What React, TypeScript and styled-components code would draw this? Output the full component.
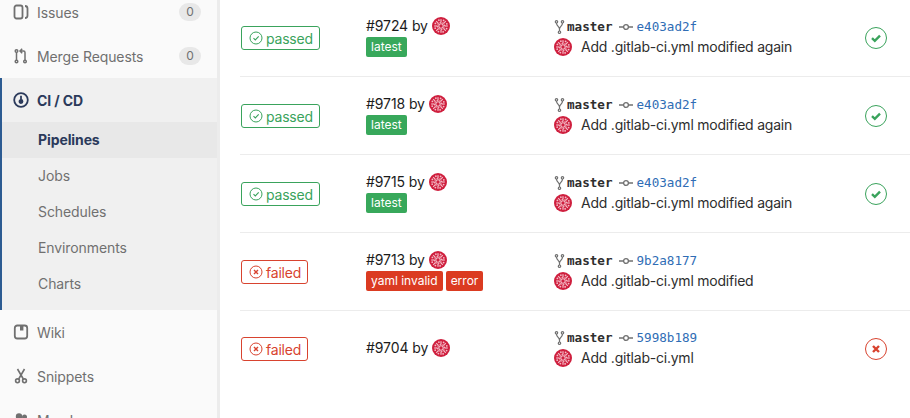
import React from "react"
import styled, { createGlobalStyle } from "styled-components"

const GlobalStyle = createGlobalStyle`
  html, body {
    margin: 0;
    padding: 0;
    background: #fff;
  }
  body {
    font-family: Inter, "Liberation Sans", sans-serif;
    font-size: 14px;
    color: #2e2e2e;
    overflow: hidden;
  }
`

const Page = styled.div`
  display: flex;
  width: 910px;
  height: 418px;
  overflow: hidden;
`

const Sidebar = styled.aside`
  flex: 0 0 217px;
  height: 418px;
  background: #fafafa;
  border-right: 3px solid #ececec;
  overflow: hidden;
`

const SideList = styled.nav`
  margin-top: -10px;
`

const SideItem = styled.div`
  display: flex;
  align-items: center;
  height: 44px;
  padding: 0 16px 0 13px;
  color: #707070;
  font-size: 14px;
  letter-spacing: -0.1px;
`

const SideIcon = styled.svg`
  flex: 0 0 16px;
  width: 16px;
  height: 16px;
  margin-right: 8px;
  fill: none;
  stroke: currentColor;
  stroke-width: 1.6;
`

const Count = styled.span`
  margin-left: auto;
  width: 22px;
  height: 18px;
  border-radius: 9px;
  background: #e8e8e8;
  color: #707070;
  font-size: 12px;
  line-height: 18px;
  text-align: center;
`

const ActiveGroup = styled.div`
  background: #f0f0f0;
  border-left: 2px solid #2c5b92;
  padding-bottom: 8px;
`

const ActiveHead = styled(SideItem)`
  padding-left: 11px;
  color: #2b3a5b;
  font-weight: 700;
`

const SubItem = styled.div<{ $active?: boolean }>`
  height: 36px;
  padding-left: 36px;
  line-height: 36px;
  font-size: 14px;
  letter-spacing: -0.1px;
  color: ${p => (p.$active ? "#2b3a5b" : "#707070")};
  font-weight: ${p => (p.$active ? 700 : 400)};
  background: ${p => (p.$active ? "#e8e8e8" : "transparent")};
`

const Main = styled.main`
  flex: 1;
  margin-top: -1px;
  padding-left: 20px;
`

const Row = styled.div`
  display: grid;
  grid-template-columns: 126px 188px 311px 1fr;
  align-items: center;
  height: 77px;
  border-bottom: 1px solid #ececec;
  &:last-child {
    height: 75px;
    border-bottom: none;
  }
`

const Status = styled.div<{ $color: string }>`
  display: inline-flex;
  justify-self: start;
  align-items: center;
  gap: 3px;
  height: 24px;
  margin: 1px 0 0 1px;
  padding: 0 6px 0 7px;
  box-sizing: border-box;
  border: 1px solid ${p => p.$color};
  border-radius: 3px;
  color: ${p => p.$color};
  font-size: 14px;
  letter-spacing: -0.2px;
`

const PipelineCell = styled.div`
  display: flex;
  flex-direction: column;
  gap: 2px;
  padding-bottom: 2px;
`

const IdLine = styled.div`
  display: flex;
  align-items: center;
  gap: 4px;
  height: 18px;
  color: #1c1c1c;
  letter-spacing: -0.1px;
`

const Tags = styled.div`
  display: flex;
  gap: 3px;
`

const Tag = styled.span<{ $color: string }>`
  height: 20px;
  padding: 0 5px;
  border-radius: 2px;
  background: ${p => p.$color};
  color: #fff;
  font-size: 12px;
  line-height: 20px;
`

const CommitCell = styled.div`
  display: flex;
  flex-direction: column;
  padding-bottom: 2px;
`

const RefLine = styled.div`
  display: flex;
  align-items: center;
  height: 20px;
  font-family: "DejaVu Sans Mono", "Liberation Mono", monospace;
  font-size: 12.6px;
`

const BranchName = styled.span`
  margin-left: 2px;
  font-weight: 700;
  color: #2e2e2e;
`

const Sha = styled.span`
  margin-left: 4px;
  color: #2f6db5;
`

const MessageLine = styled.div`
  display: flex;
  align-items: center;
  gap: 9px;
  height: 20px;
  color: #2e2e2e;
  letter-spacing: -0.22px;
`

const StageCell = styled.div`
  display: flex;
`

const StageRing = styled.span<{ $color: string }>`
  display: flex;
  align-items: center;
  justify-content: center;
  width: 22px;
  height: 22px;
  box-sizing: border-box;
  border: 1px solid ${p => p.$color};
  border-radius: 50%;
  color: ${p => p.$color};
`

const GREEN = "#3aa35c"
const RED = "#d8432f"

const Avatar = () => {
  const spokes = [0, 45, 90, 135, 180, 225, 270, 315]
  return (
    <svg width="18" height="18" viewBox="0 0 18 18" style={{ flex: "0 0 18px" }}>
      <circle cx="9" cy="9" r="9" fill="#cf1f3e" />
      {spokes.map(a => (
        <g key={a} transform={`rotate(${a} 9 9)`} fill="#f4bcc7">
          <rect x="8.4" y="2.2" width="1.2" height="3.4" />
          <circle cx="11.6" cy="3.4" r="0.9" />
          <circle cx="10.9" cy="6" r="0.7" />
        </g>
      ))}
      <circle cx="9" cy="9" r="2.2" fill="none" stroke="#f4bcc7" strokeWidth="1.1" />
    </svg>
  )
}

const StatusGlyph = ({ failed }: { failed: boolean }) => (
  <svg width="14" height="14" viewBox="0 0 14 14" fill="none" stroke="currentColor">
    <circle cx="7" cy="7" r="6" strokeWidth="1" />
    {failed ? (
      <path d="M5 5l4 4M9 5l-4 4" strokeWidth="1.4" />
    ) : (
      <path d="M4.5 7.2l1.8 1.800 3.400-3.600" strokeWidth="1.1" />
    )}
  </svg>
)

const StageGlyph = ({ failed }: { failed: boolean }) => (
  <svg width="12" height="12" viewBox="0 0 12 12" fill="none" stroke="currentColor" strokeWidth="2.4">
    {failed ? <path d="M3 3l6 6M9 3l-6 6" /> : <path d="M2 6.200l2.800 2.600 5.200-5.200" />}
  </svg>
)

const BranchIcon = () => (
  <svg width="11" height="14" viewBox="0 0 11 14" fill="none" stroke="#707070" strokeWidth="1.2">
    <circle cx="2.500" cy="1.800" r="1.200" />
    <circle cx="8.500" cy="1.800" r="1.200" />
    <circle cx="5.500" cy="12.200" r="1.200" />
    <path d="M2.500 3c0 3.200 3 3.500 3 6v2M8.500 3c0 3.200-3 3.500-3 6" />
  </svg>
)

const CommitIcon = () => (
  <svg width="14" height="8" viewBox="0 0 14 8" fill="none" stroke="#707070" strokeWidth="1.3" style={{ marginLeft: 6 }}>
    <circle cx="7" cy="4" r="2.400" />
    <path d="M0 4h4.400M9.600 4H14" />
  </svg>
)

type Pipeline = {
  failed: boolean
  id: string
  sha: string
  message: string
  tags: { label: string; color: string }[]
  stage?: boolean
}

const pipelines: Pipeline[] = [
  { failed: false, id: "#9724", sha: "e403ad2f", message: "Add .gitlab-ci.yml modified again", tags: [{ label: "latest", color: "#38a85b" }], stage: true },
  { failed: false, id: "#9718", sha: "e403ad2f", message: "Add .gitlab-ci.yml modified again", tags: [{ label: "latest", color: "#38a85b" }], stage: true },
  { failed: false, id: "#9715", sha: "e403ad2f", message: "Add .gitlab-ci.yml modified again", tags: [{ label: "latest", color: "#38a85b" }], stage: true },
  { failed: true, id: "#9713", sha: "9b2a8177", message: "Add .gitlab-ci.yml modified", tags: [{ label: "yaml invalid", color: "#db3b21" }, { label: "error", color: "#db3b21" }] },
  { failed: true, id: "#9704", sha: "5998b189", message: "Add .gitlab-ci.yml", tags: [], stage: true },
]

export default function App() {
  return (
    <>
      <GlobalStyle />
      <Page>
        <Sidebar>
          <SideList>
            <SideItem>
              <SideIcon viewBox="0 0 16 16" style={{ strokeWidth: 1.8 }}>
                <rect x="1.500" y="1.500" width="8" height="13" rx="2" />
                <path d="M12 2c2 0 2.500 1 2.500 2.500v7c0 1.500-.5 2.500-2.500 2.500" />
              </SideIcon>
              Issues
              <Count>0</Count>
            </SideItem>
            <SideItem>
              <SideIcon viewBox="0 0 16 16" style={{ strokeWidth: 1.5 }}>
                <circle cx="3.500" cy="3" r="1.300" />
                <circle cx="3.500" cy="13.500" r="1.300" />
                <circle cx="12" cy="13.500" r="1.300" />
                <path d="M3.500 4.300v7.900M12 12.200V4.500c0-1-.5-1.500-1.500-1.500H7.500M9.200 .8L7 3l2.200 2.200" />
              </SideIcon>
              Merge Requests
              <Count>0</Count>
            </SideItem>
            <ActiveGroup>
              <ActiveHead>
                <SideIcon viewBox="0 0 16 16" style={{ strokeWidth: 1.8 }}>
                  <circle cx="8" cy="8" r="6.800" />
                  <path d="M8 3.800v4" />
                  <circle cx="8" cy="9.500" r="1.500" fill="currentColor" />
                </SideIcon>
                CI / CD
              </ActiveHead>
              <SubItem $active>Pipelines</SubItem>
              <SubItem>Jobs</SubItem>
              <SubItem>Schedules</SubItem>
              <SubItem>Environments</SubItem>
              <SubItem>Charts</SubItem>
            </ActiveGroup>
            <SideItem>
              <SideIcon viewBox="0 0 16 16" style={{ strokeWidth: 1.8 }}>
                <rect x="1.800" y="1.500" width="12.400" height="13" rx="2.500" />
                <rect x="7" y="1.500" width="3.400" height="5" fill="currentColor" stroke="none" />
              </SideIcon>
              Wiki
            </SideItem>
            <SideItem>
              <SideIcon viewBox="0 0 16 16">
                <circle cx="4.500" cy="12.800" r="1.900" />
                <circle cx="11.500" cy="12.800" r="1.900" />
                <path d="M4.500 1l5.800 10M11.500 1L5.700 11" />
              </SideIcon>
              Snippets
            </SideItem>
            <SideItem>
              <SideIcon viewBox="0 0 16 16" style={{ fill: "currentColor", strokeWidth: 0 }}>
                <circle cx="6" cy="4.500" r="3.200" />
                <circle cx="11.500" cy="5" r="2.500" />
                <path d="M0.500 14c0-4 2-5.500 5.500-5.500s5.500 1.500 5.500 5.500z" />
              </SideIcon>
              Members
            </SideItem>
          </SideList>
        </Sidebar>
        <Main>
          {pipelines.map(p => (
            <Row key={p.id}>
              <Status $color={p.failed ? RED : GREEN}>
                <StatusGlyph failed={p.failed} />
                {p.failed ? "failed" : "passed"}
              </Status>
              <PipelineCell>
                <IdLine>
                  {p.id} by <Avatar />
                </IdLine>
                {p.tags.length > 0 && (
                  <Tags>
                    {p.tags.map(t => (
                      <Tag key={t.label} $color={t.color}>{t.label}</Tag>
                    ))}
                  </Tags>
                )}
              </PipelineCell>
              <CommitCell>
                <RefLine>
                  <BranchIcon />
                  <BranchName>master</BranchName>
                  <CommitIcon />
                  <Sha>{p.sha}</Sha>
                </RefLine>
                <MessageLine>
                  <Avatar />
                  {p.message}
                </MessageLine>
              </CommitCell>
              <StageCell>
                {p.stage && (
                  <StageRing $color={p.failed ? RED : GREEN}>
                    <StageGlyph failed={p.failed} />
                  </StageRing>
                )}
              </StageCell>
            </Row>
          ))}
        </Main>
      </Page>
    </>
  )
}
